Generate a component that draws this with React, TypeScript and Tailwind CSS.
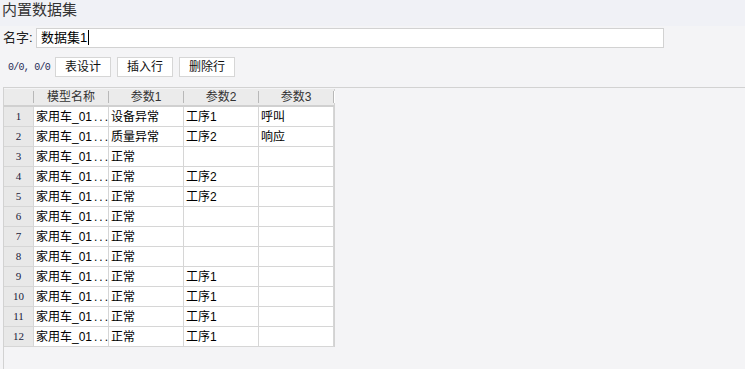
const rows: [string, string, string, string][] = [
  ["家用车_01", "设备异常", "工序1", "呼叫"],
  ["家用车_01", "质量异常", "工序2", "响应"],
  ["家用车_01", "正常", "", ""],
  ["家用车_01", "正常", "工序2", ""],
  ["家用车_01", "正常", "工序2", ""],
  ["家用车_01", "正常", "", ""],
  ["家用车_01", "正常", "", ""],
  ["家用车_01", "正常", "", ""],
  ["家用车_01", "正常", "工序1", ""],
  ["家用车_01", "正常", "工序1", ""],
  ["家用车_01", "正常", "工序1", ""],
  ["家用车_01", "正常", "工序1", ""],
];

const headers = ["", "模型名称", "参数1", "参数2", "参数3"];

function HeaderCell({ label }: { label: string }) {
  return (
    <div className="flex h-[16px] items-center">
      <span className="flex-1 text-center leading-none">{label}</span>
      <span className="h-[12px] w-px bg-[#b8b8b8] shadow-[1px_0_0_#ffffff]" />
    </div>
  );
}

export default function App() {
  return (
    <div
      className="flex h-[369px] w-[745px] flex-col overflow-hidden bg-[#f4f4f6] text-[12px] text-[#000]"
      style={{ fontFamily: '"Liberation Sans", "Noto Sans CJK SC", sans-serif' }}
    >
      <div className="h-[26px] bg-[#f0f1f6] pl-[2px] pt-px text-[15px] leading-[18px] text-[#333]">
        内置数据集
      </div>

      <div className="flex h-[23px] items-center pl-[3px]">
        <span className="w-[33px] text-[13px] text-[#222]">名字:</span>
        <div className="flex h-[20px] w-[628px] items-center border border-[#d2d2d2] bg-white pl-[4px] text-[13px]">
          数据集1
          <span className="ml-px h-[15px] w-px bg-black" />
        </div>
      </div>

      <div className="mt-[8px] flex h-[20px] items-center pl-[8px]">
        <span
          className="mr-[5px] w-[42px] whitespace-nowrap text-[10px] tracking-[-0.75px] text-[#1f2a55]"
          style={{ fontFamily: '"Liberation Mono", monospace' }}
        >
          0/0, 0/0
        </span>
        <div className="flex gap-[6px]">
          {["表设计", "插入行", "删除行"].map((b) => (
            <button
              key={b}
              className="flex h-[20px] w-[56px] items-center justify-center border border-[#d6d6d6] bg-white text-[12px] text-[#111]"
            >
              {b}
            </button>
          ))}
        </div>
      </div>

      <div className="ml-[3px] mt-[10px] flex-1 border-l border-t border-[#d2d2d2]">
        <div className="mt-px grid w-[331px] grid-cols-[30px_75px_75px_75px_75px] border-r border-[#d2d2d2]">
          {headers.map((h, i) => (
            <div key={i} className="flex h-[18px] items-center border-b-2 border-[#d0d0d0] bg-[#ebebeb] text-[#333]">
              <div className="flex-1">
                <HeaderCell label={h} />
              </div>
            </div>
          ))}
          {rows.map((r, i) => (
            <div key={i} className="contents">
              <div
                className="flex h-[20px] items-center justify-center border-b border-r border-[#d6d6d6] bg-[#e8e8e8] text-[11px] text-[#1a1a3a]"
                style={{ fontFamily: '"Liberation Serif", serif' }}
              >
                {i + 1}
              </div>
              {r.map((c, j) => (
                <div
                  key={j}
                  className="flex h-[20px] items-center overflow-hidden whitespace-nowrap border-b border-r border-[#d6d6d6] bg-white pl-[2px]"
                >
                  {c}
                  {j === 0 && <span className="ml-[2px] tracking-[2px]">...</span>}
                </div>
              ))}
            </div>
          ))}
        </div>
      </div>
    </div>
  );
}
